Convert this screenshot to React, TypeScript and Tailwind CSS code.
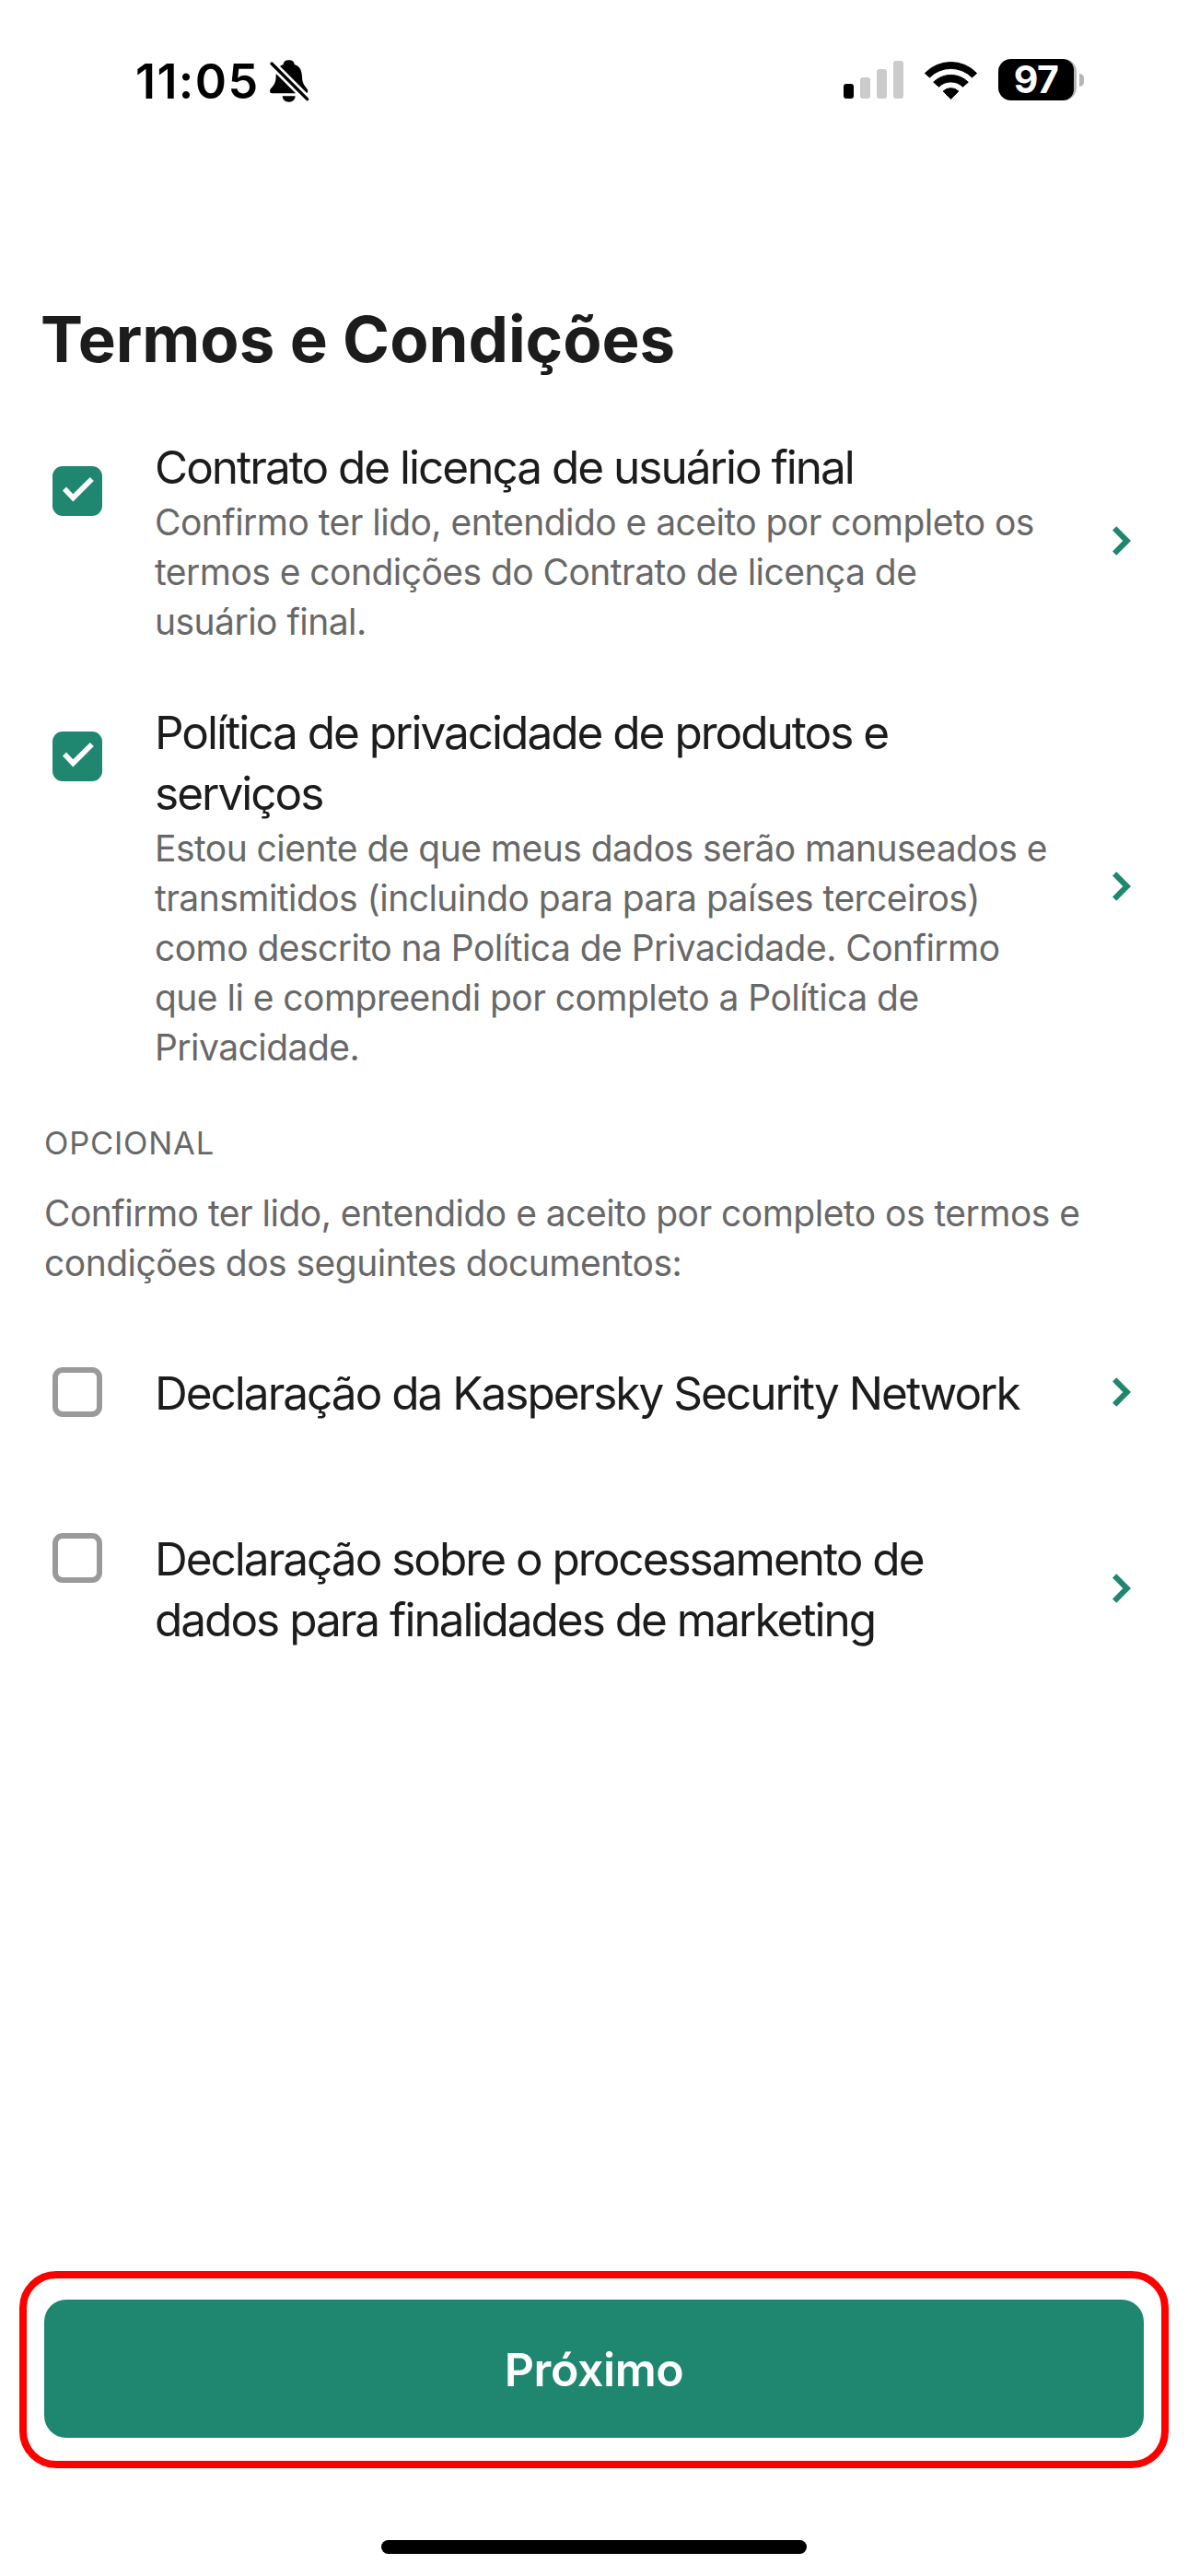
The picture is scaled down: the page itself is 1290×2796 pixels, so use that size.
type Item = {
  title: string[];
  desc?: string[];
  checked: boolean;
};

const required: Item[] = [
  {
    title: ["Contrato de licença de usuário final"],
    desc: [
      "Confirmo ter lido, entendido e aceito por completo os",
      "termos e condições do Contrato de licença de",
      "usuário final.",
    ],
    checked: true,
  },
  {
    title: ["Política de privacidade de produtos e", "serviços"],
    desc: [
      "Estou ciente de que meus dados serão manuseados e",
      "transmitidos (incluindo para para países terceiros)",
      "como descrito na Política de Privacidade. Confirmo",
      "que li e compreendi por completo a Política de",
      "Privacidade.",
    ],
    checked: true,
  },
];

const optional: Item[] = [
  { title: ["Declaração da Kaspersky Security Network"], checked: false },
  {
    title: ["Declaração sobre o processamento de", "dados para finalidades de marketing"],
    checked: false,
  },
];

function BellOff() {
  return (
    <svg className="w-[45px] h-[48px]" viewBox="515 72 135 144">
      <path d="M518 177C518 166 538 160 538 130C538 108 546 95 562 90C563 80 570 76 580 76C590 76 597 80 598 90C615 95 622 108 623 130C623 160 642 166 642 177Q642 184 635 184H525Q518 184 518 177Z" />
      <path d="M559 193H601C600 205 592 212 580 212C568 212 560 205 559 193Z" />
      <path d="M516 79L650 213" stroke="#fff" strokeWidth={26} />
      <path d="M524 87L640 203" stroke="#000" strokeWidth={10} strokeLinecap="round" />
    </svg>
  );
}

function Wifi() {
  return (
    <svg className="w-[59px] h-[44px]" viewBox="339.5 72 177 132">
      <g stroke="#000" strokeWidth={3} strokeLinejoin="round">
        <path d="M343.5 115.500A119.500 123 0 0 1 512.500 115.500L497 129A97 97 0 0 0 359 129Z" />
        <path d="M371.500 144.500A80 80 0 0 1 484.500 144.500L467 159.500A56 56 0 0 0 389 159.500Z" />
        <path d="M403 174A36 36 0 0 1 453 174L428 199.500Z" />
      </g>
    </svg>
  );
}

function Checkbox({ checked }: { checked: boolean }) {
  if (!checked) {
    return <div className="size-[54px] shrink-0 rounded-[11px] border-6 border-[#9a9a9a]" />;
  }
  return (
    <div className="size-[54px] shrink-0 rounded-[11px] bg-[#1f866f]">
      <svg viewBox="0 0 54 54" fill="#fff">
        <path d="M11 26.500L15 22.500L22.300 30.300L40.800 12L44.800 16L22.300 38.500Z" />
      </svg>
    </div>
  );
}

function Chevron() {
  return (
    <svg className="w-5 h-8 mb-0.5 shrink-0 self-center" viewBox="0 0 20 32" fill="#1f866f">
      <path d="M0 4.500L4.300 0.200L20 16L4.300 31.800L0 27.500L11.300 16Z" />
    </svg>
  );
}

function TermRow({ item }: { item: Item }) {
  return (
    <div className="flex items-start pl-[57px] pr-[62px]">
      <div className={item.desc ? "pt-8" : "pt-[5px]"}>
        <Checkbox checked={item.checked} />
      </div>
      <div className="ml-[57px] flex-1 whitespace-nowrap">
        <h2 className="text-[49.5px] leading-[66px] tracking-[-2px] text-[#1c1c1c]">
          {item.title.map((line) => (
            <span key={line} className="block">{line}</span>
          ))}
        </h2>
        {item.desc && (
          <p className="text-[39px] leading-[54px] tracking-[-0.54px] text-[#686868]">
            {item.desc.map((line) => (
              <span key={line} className="block">{line}</span>
            ))}
          </p>
        )}
      </div>
      <Chevron />
    </div>
  );
}

export default function App() {
  return (
    <div className="flex h-[2796px] w-[1290px] flex-col overflow-hidden bg-white font-['Inter',sans-serif]">
      {/* Status bar */}
      <div className="mt-[58px] flex h-[60px] items-center justify-between pl-[147px] pr-[113px] text-black">
        <div className="flex items-center">
          <span className="w-[145px] pt-px text-[52px] font-semibold leading-[60px] tracking-[1.4px]">11:05</span>
          <BellOff />
        </div>
        <div className="mb-[3px] flex items-center">
          <div className="flex h-[41px] items-end gap-[7px]">
            <div className="h-4 w-[11px] rounded-[3px] bg-black" />
            <div className="h-[23px] w-[11px] rounded-[3px] bg-[#cbcbcb]" />
            <div className="h-8 w-[11px] rounded-[3px] bg-[#cbcbcb]" />
            <div className="h-[41px] w-[11px] rounded-[3px] bg-[#cbcbcb]" />
          </div>
          <div className="mx-[22px]">
            <Wifi />
          </div>
          <div className="h-[45px] w-[85px] rounded-[14px] bg-[#b5b5b5]">
            <div className="w-[82px] rounded-l-[14px] rounded-r-[12px] bg-black text-center text-[41px] font-bold leading-[45px] tracking-[-0.5px] text-white">
              97
            </div>
          </div>
          <div className="ml-[3px] h-[14px] w-[5px] rounded-r-full bg-[#b5b5b5]" />
        </div>
      </div>

      <h1 className="mt-[208px] pl-11 text-[69px] font-bold leading-[84px] text-[#1c1c1c]">
        Termos e Condições
      </h1>

      <div className="mt-16 flex flex-col gap-[60px]">
        {required.map((item) => (
          <TermRow key={item.title[0]} item={item} />
        ))}
      </div>

      <div className="mt-[53px] pl-12 text-[#686868]">
        <h3 className="text-[34.5px] leading-[48px] tracking-[0.8px]">OPCIONAL</h3>
        <p className="mt-[25px] text-[39px] leading-[54px] tracking-[-0.52px]">
          Confirmo ter lido, entendido e aceito por completo os termos e
          <br />
          condições dos seguintes documentos:
        </p>
      </div>

      <div className="mt-[81px] flex flex-col gap-[114px]">
        {optional.map((item) => (
          <TermRow key={item.title[0]} item={item} />
        ))}
      </div>

      {/* Footer */}
      <div className="mt-auto flex flex-col items-center pb-6">
        <div className="h-[214px] w-[1248px] rounded-[40px] border-8 border-[#ff0000] px-[19px] pt-[23px]">
          <button className="h-[150px] w-full rounded-3xl bg-[#1f866f] pt-0.5 text-[50px] font-semibold leading-none tracking-[-0.4px] text-white">
            Próximo
          </button>
        </div>
        <div className="mt-[78px] h-[15px] w-[462px] rounded-full bg-black" />
      </div>
    </div>
  );
}
